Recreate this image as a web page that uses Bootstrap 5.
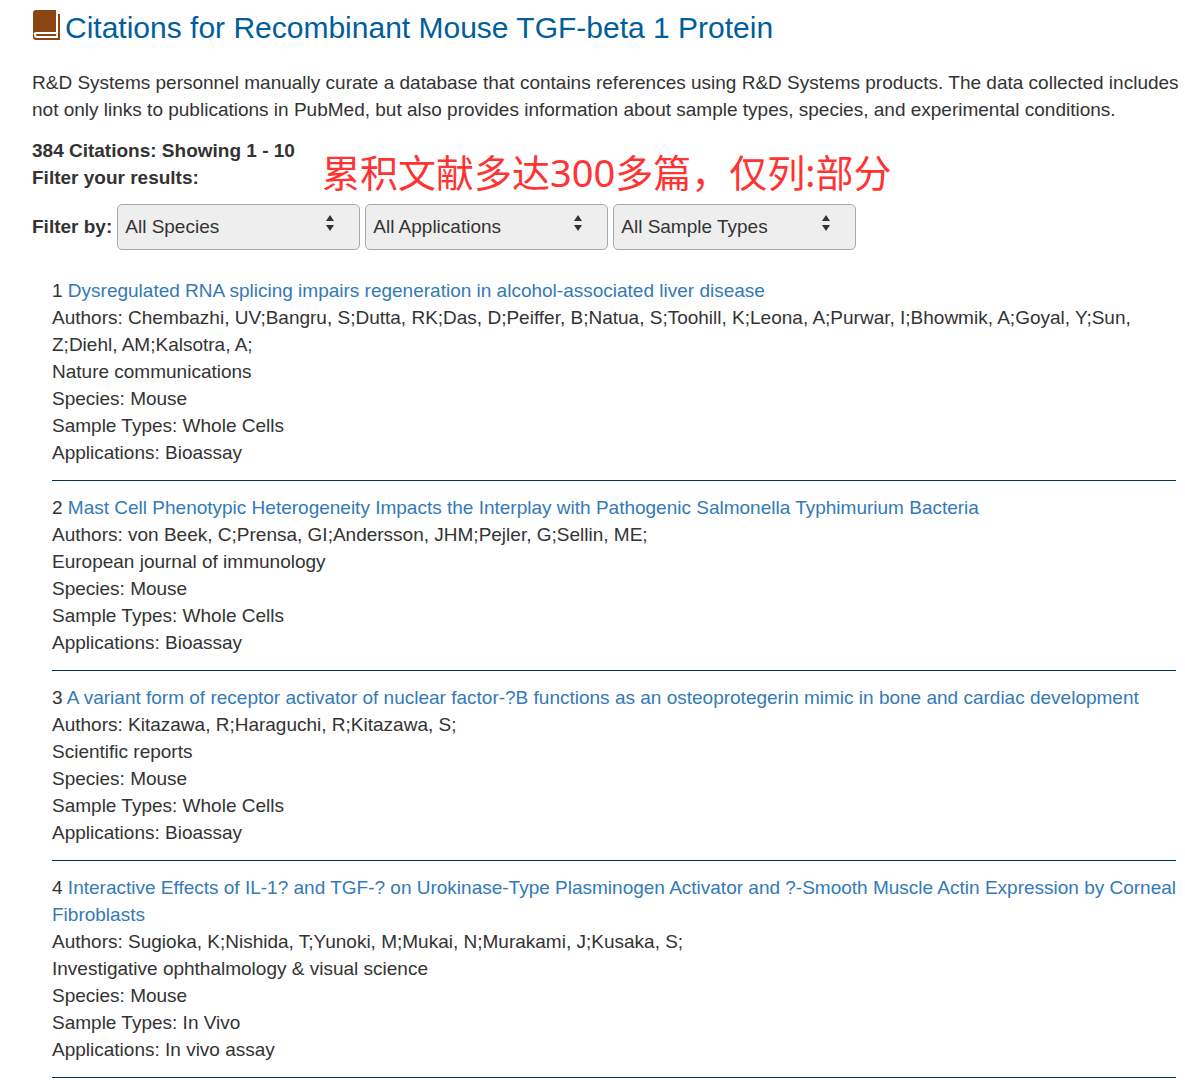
<!DOCTYPE html>
<html lang="en">
<head>
<meta charset="utf-8">
<meta name="viewport" content="width=device-width, initial-scale=1">
<title>Citations for Recombinant Mouse TGF-beta 1 Protein</title>
<link href="https://cdn.jsdelivr.net/npm/bootstrap@5.3.0/dist/css/bootstrap.min.css" rel="stylesheet">
<style>
body { font-family: "Liberation Sans", Arial, sans-serif; font-size: 19px; line-height: 27px; color: #333; background: #fff; }
.page { padding: 8px 0 0 32px; }
.page-title { font-size: 30px; line-height: 40px; color: #005e9d; margin-bottom: 21px; gap: 5px; }
.page-title svg { width: 28px; height: 32px; margin-top: 1px; flex: none; }
.intro { margin-bottom: 14px; }
.filters { gap: 5px; margin-top: 13px; margin-bottom: 27px; }
.filters label { padding-bottom: 2px; }
.filters .form-select {
  width: 243px; height: 46px; padding: 0 40px 2px 7px; font-size: 19px; line-height: 27px; color: #333;
  background-color: #eee; border: 1px solid #aaa; border-radius: 5px;
  background-image: url("data:image/svg+xml,%3Csvg xmlns='http://www.w3.org/2000/svg' viewBox='0 0 10 16'%3E%3Cpath fill='%23333' d='M5 0 9 6H1zM5 16 9 10H1z'/%3E%3C/svg%3E");
  background-size: 10px 16px; background-position: right 24px top 10px;
}
.note { position: absolute; left: 290px; top: 7px; font-family: "Noto Sans", "Noto Sans CJK SC", sans-serif; font-size: 38px; line-height: 56px; color: #ff3333; white-space: nowrap; }
.citations { padding-left: 20px; }
.citations li { margin-bottom: 13px; }
.citations li::after { content: ""; display: block; margin: 14px 9px 0 0; border-bottom: 1px solid #003458; }
.citations a { color: #337ab7; text-decoration: none; }
.citations a:hover { text-decoration: underline; }
</style>
<script src="https://cdn.jsdelivr.net/npm/bootstrap@5.3.0/dist/js/bootstrap.bundle.min.js"></script>
</head>
<body>
<main class="page">
  <h1 class="page-title d-flex fw-normal">
    <svg viewBox="0 0 28 32" aria-hidden="true">
      <path fill="#8b4513" d="M4 1H24V23H5Q2 23 1 25V4Q1 1 4 1ZM26 5H28V31H4Q1 31 1 28V25H26Z"/>
      <path fill="#fff" d="M5 23H26V29H5Q2 29 2 26Q2 23 5 23Z"/>
      <path fill="#8b4513" d="M5 25H24V27H5Q4 27 4 26Q4 25 5 25Z"/>
    </svg>
    <span>Citations for Recombinant Mouse TGF-beta 1 Protein</span>
  </h1>
  <p class="intro">R&amp;D Systems personnel manually curate a database that contains references using R&amp;D Systems products. The data collected includes not only links to publications in PubMed, but also provides information about sample types, species, and experimental conditions.</p>
  <div class="position-relative fw-bold">
    <div>384 Citations: Showing 1 - 10</div>
    <div>Filter your results:</div>
    <div class="note fw-normal" lang="zh-CN">累积文献多达300多篇，仅列:部分</div>
  </div>
  <form class="filters d-flex flex-wrap align-items-center">
    <label class="fw-bold" for="species">Filter by:</label>
    <select class="form-select" id="species"><option>All Species</option></select>
    <select class="form-select" aria-label="Applications"><option>All Applications</option></select>
    <select class="form-select" aria-label="Sample types"><option>All Sample Types</option></select>
  </form>
  <ul class="citations list-unstyled mb-0">
    <li>
      <div>1 <a href="#">Dysregulated RNA splicing impairs regeneration in alcohol-associated liver disease</a></div>
      <div>Authors: Chembazhi, UV;Bangru, S;Dutta, RK;Das, D;Peiffer, B;Natua, S;Toohill, K;Leona, A;Purwar, I;Bhowmik, A;Goyal, Y;Sun, Z;Diehl, AM;Kalsotra, A;</div>
      <div>Nature communications</div>
      <div>Species: Mouse</div>
      <div>Sample Types: Whole Cells</div>
      <div>Applications: Bioassay</div>
    </li>
    <li>
      <div>2 <a href="#">Mast Cell Phenotypic Heterogeneity Impacts the Interplay with Pathogenic Salmonella Typhimurium Bacteria</a></div>
      <div>Authors: von Beek, C;Prensa, GI;Andersson, JHM;Pejler, G;Sellin, ME;</div>
      <div>European journal of immunology</div>
      <div>Species: Mouse</div>
      <div>Sample Types: Whole Cells</div>
      <div>Applications: Bioassay</div>
    </li>
    <li>
      <div>3 <a href="#">A variant form of receptor activator of nuclear factor-?B functions as an osteoprotegerin mimic in bone and cardiac development</a></div>
      <div>Authors: Kitazawa, R;Haraguchi, R;Kitazawa, S;</div>
      <div>Scientific reports</div>
      <div>Species: Mouse</div>
      <div>Sample Types: Whole Cells</div>
      <div>Applications: Bioassay</div>
    </li>
    <li class="mb-0">
      <div>4 <a href="#">Interactive Effects of IL-1? and TGF-? on Urokinase-Type Plasminogen Activator and ?-Smooth Muscle Actin Expression by Corneal Fibroblasts</a></div>
      <div>Authors: Sugioka, K;Nishida, T;Yunoki, M;Mukai, N;Murakami, J;Kusaka, S;</div>
      <div>Investigative ophthalmology &amp; visual science</div>
      <div>Species: Mouse</div>
      <div>Sample Types: In Vivo</div>
      <div>Applications: In vivo assay</div>
    </li>
  </ul>
</main>
</body>
</html>
